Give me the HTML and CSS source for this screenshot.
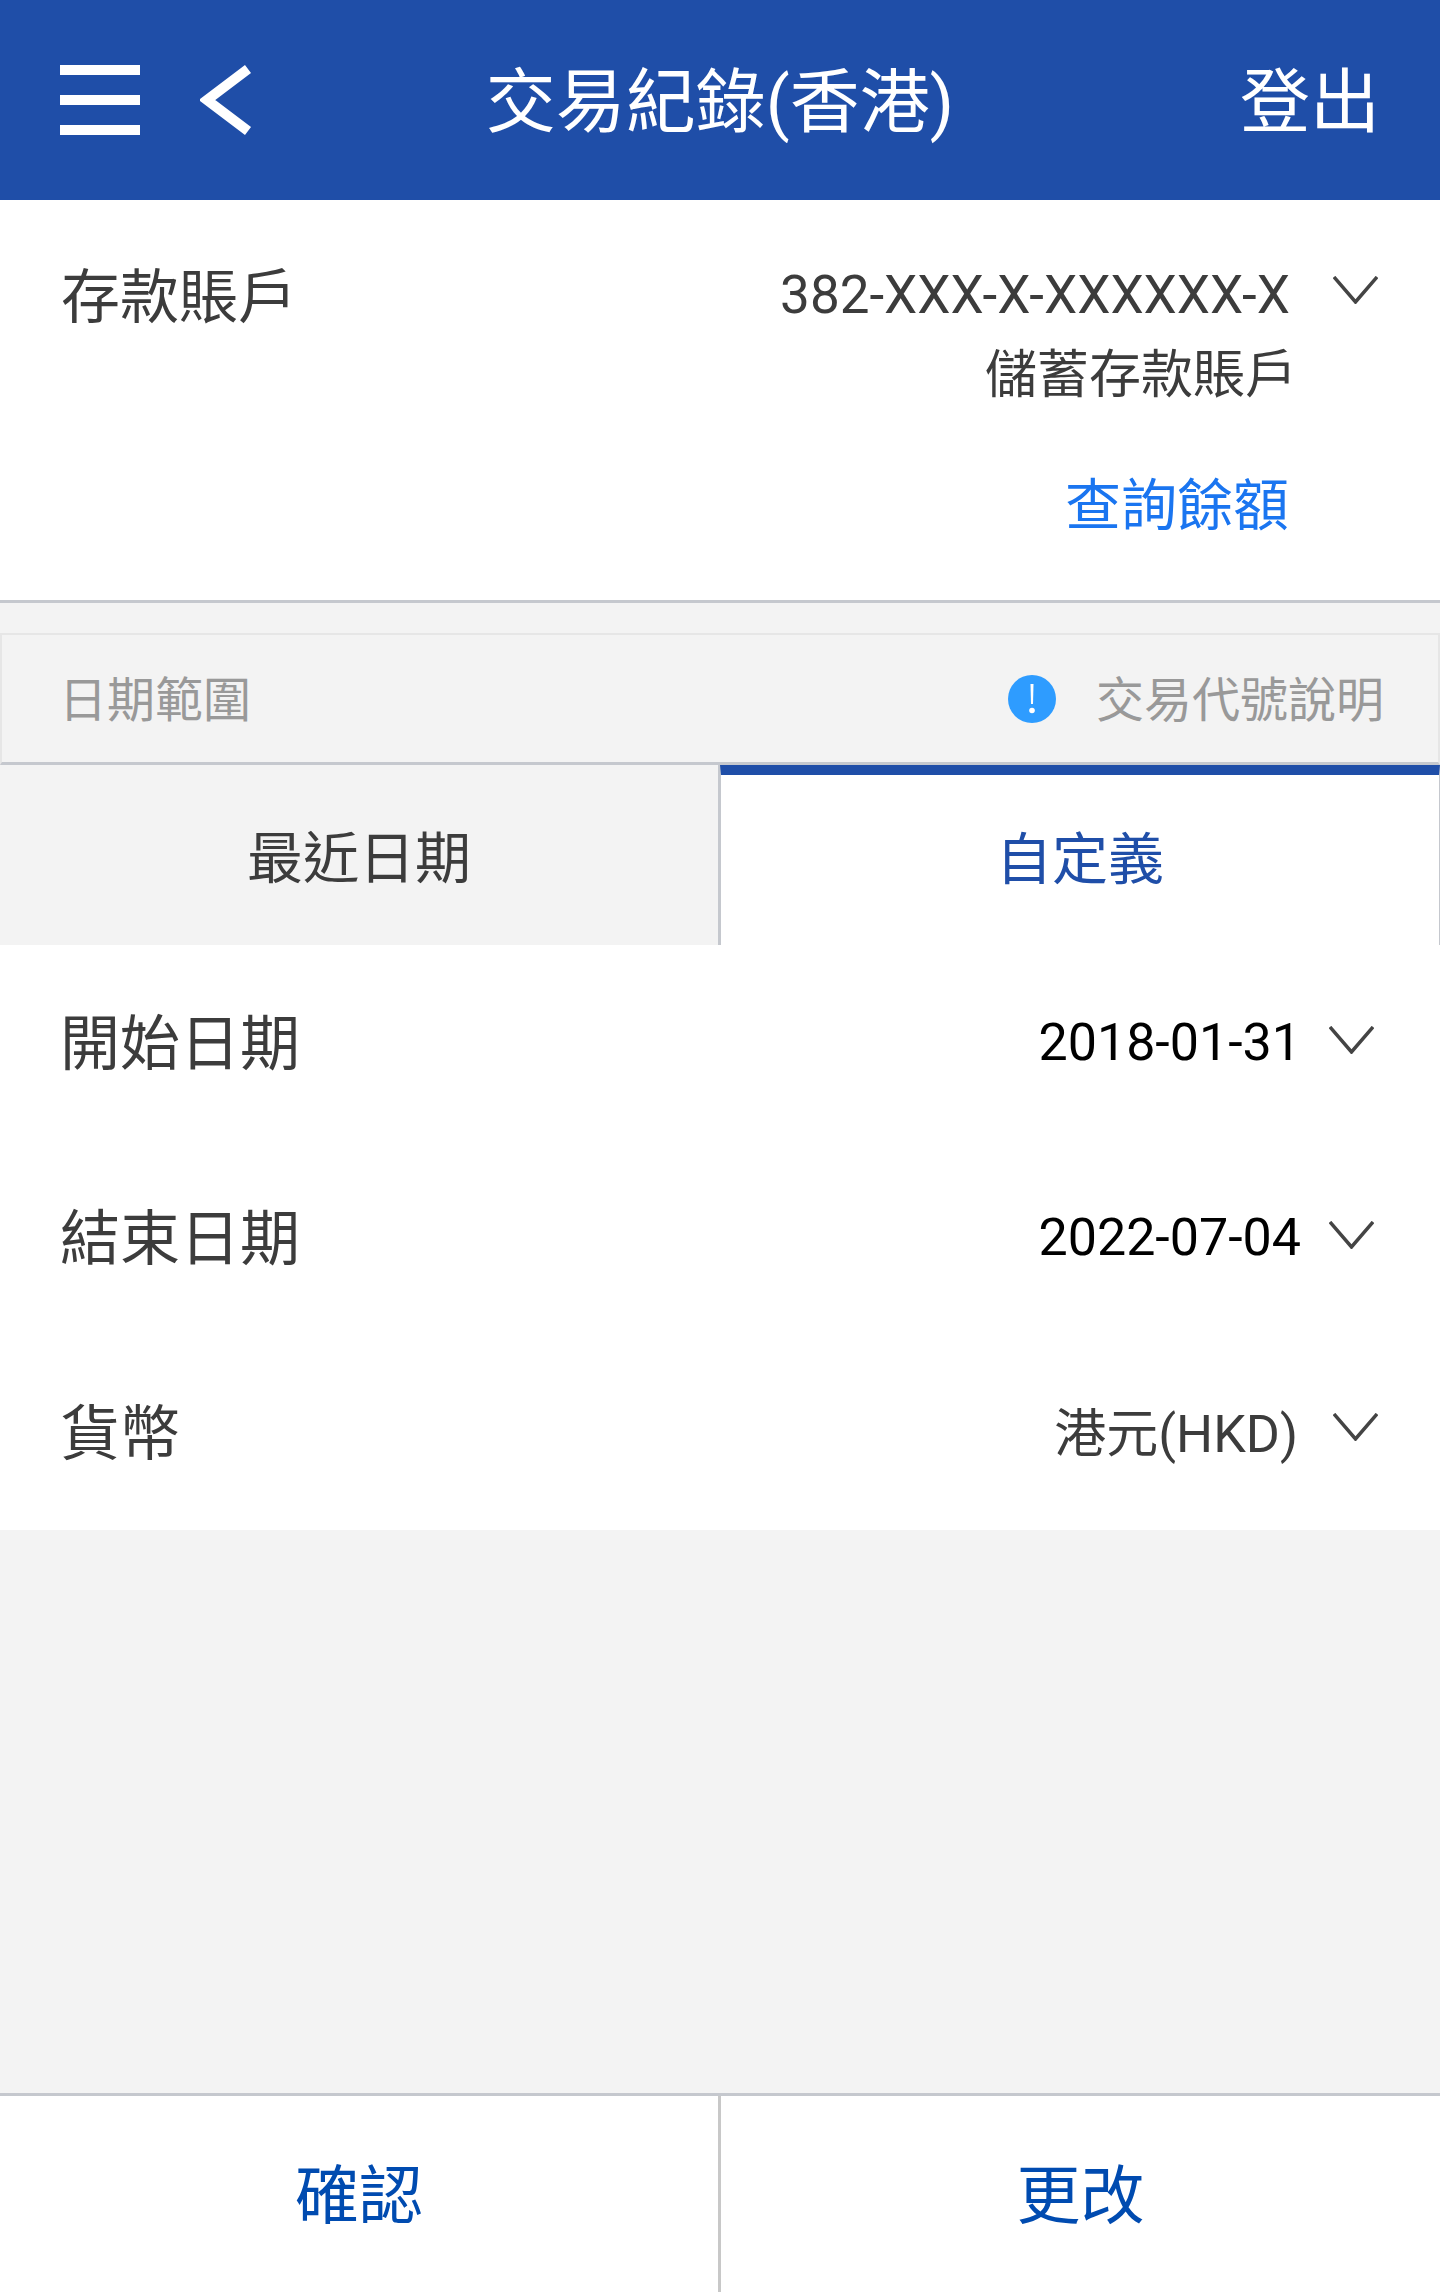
FILE: index.html
```html
<!DOCTYPE html>
<html lang="zh-Hant">
<head>
  <meta charset="UTF-8">
  <meta name="viewport" content="width=device-width, initial-scale=1.0">
  <title>交易紀錄(香港)</title>
  <link rel="stylesheet" href="styles.css">
</head>
<body>

  <div class="page">
    <!-- Header -->
    <div class="header">
      <div class="header-left">
        <svg class="menu-icon" viewBox="0 0 80 70"><path d="M0 0h80v10H0zM0 30h80v10H0zM0 60h80v10H0z" fill="#fff"/></svg>
        <svg class="back-icon" viewBox="0 0 52 70"><path d="M48 4 7 35l41 31" fill="none" stroke="#fff" stroke-width="10"/></svg>
      </div>
      <div class="header-title">交易紀錄(香港)</div>
      <div class="header-right">登出</div>
    </div>

    <!-- Account -->
    <div class="account">
      <div class="account-label">存款賬戶</div>
      <div class="account-info">
        <div class="account-top">
          <div class="account-number">382-XXX-X-XXXXXX-X</div>
          <svg class="chevron chevron-account" viewBox="0 0 45 28"><path d="m1 1 21.500 25L44 1" fill="none" stroke="#444" stroke-width="3.500"/></svg>
        </div>
        <div class="account-type">儲蓄存款賬戶</div>
        <div class="account-link">查詢餘額</div>
      </div>
    </div>

    <!-- Date range heading -->
    <div class="range-head">
      <div>日期範圍</div>
      <div class="range-help">
        <svg class="info-icon" viewBox="0 0 48 48">
          <circle cx="24" cy="24" r="24" fill="#2e9cff"/>
          <path d="M22.500 9h3l-.5 20h-2z" fill="#fff"/>
          <circle cx="24" cy="35.500" r="2.800" fill="#fff"/>
        </svg>
        <span>交易代號說明</span>
      </div>
    </div>

    <!-- Tabs -->
    <div class="tabs">
      <div class="tab">最近日期</div>
      <div class="tab tab-active">自定義</div>
    </div>

    <!-- Form -->
    <div class="form">
      <div class="form-row">
        <div class="form-label">開始日期</div>
        <div class="form-value">2018-01-31</div>
        <svg class="chevron" viewBox="0 0 45 28"><path d="m1 1 21.500 25L44 1" fill="none" stroke="#444" stroke-width="3.500"/></svg>
      </div>
      <div class="form-row">
        <div class="form-label">結束日期</div>
        <div class="form-value">2022-07-04</div>
        <svg class="chevron" viewBox="0 0 45 28"><path d="m1 1 21.500 25L44 1" fill="none" stroke="#444" stroke-width="3.500"/></svg>
      </div>
      <div class="form-row">
        <div class="form-label">貨幣</div>
        <div class="form-value form-value-grey">港元(HKD)</div>
        <svg class="chevron chevron-currency" viewBox="0 0 45 28"><path d="m1 1 21.500 25L44 1" fill="none" stroke="#444" stroke-width="3.500"/></svg>
      </div>
    </div>

    <div class="filler"></div>

    <!-- Footer -->
    <div class="footer">
      <div class="footer-btn">確認</div>
      <div class="footer-btn">更改</div>
    </div>
  </div>

</body>
</html>
```

FILE: styles.css
```css
body {
  font-family: Roboto, "Noto Sans CJK TC", sans-serif;
  background-color: #f3f3f3;
  color: #3c3c3c;
  margin: 0;
  padding: 0;
}

.page {
  height: 2292px;
  display: flex;
  flex-direction: column;
  overflow: hidden;
}

.header {
  height: 200px;
  flex-shrink: 0;
  box-sizing: border-box;
  background-color: #1f4ea8;
  color: #fff;
  display: grid;
  grid-template-columns: 1fr auto 1fr;
  align-items: center;
  padding: 0 60px;
  font-size: 70px;
}

.header-title,
.header-right {
  padding-bottom: 8px;
}

.header-left {
  display: flex;
  align-items: center;
  gap: 60px;
}

.menu-icon {
  width: 80px;
  height: 70px;
}

.back-icon {
  width: 52px;
  height: 70px;
}

.header-right {
  text-align: right;
}

.account {
  height: 403px;
  flex-shrink: 0;
  box-sizing: border-box;
  background-color: #fff;
  border-bottom: 3px solid #c5c8ce;
  display: flex;
  justify-content: space-between;
  padding: 50px 62px 0 61px;
}

.account-label {
  font-size: 59px;
  line-height: 84px;
  margin-top: 6px;
}

.account-info {
  text-align: right;
  font-size: 52px;
  width: 620px;
  margin-top: 9px;
}

.account-number {
  font-size: 53px;
}

.account-top {
  display: flex;
  align-items: center;
  justify-content: flex-end;
  gap: 43px;
  height: 72px;
}

.account-type {
  line-height: 72px;
  margin-top: 9px;
  padding-right: 81px;
}

.account-link {
  color: #1a75f0;
  font-size: 56px;
  line-height: 80px;
  margin-top: 54px;
  padding-right: 89px;
}

.chevron {
  width: 45px;
  height: 28px;
  flex-shrink: 0;
}

.chevron-account {
  margin-top: -10px;
}

.range-head {
  height: 132px;
  flex-shrink: 0;
  box-sizing: border-box;
  margin-top: 30px;
  border: 2px solid #e6e6e6;
  border-bottom: 3px solid #c5c8ce;
  display: flex;
  align-items: center;
  justify-content: space-between;
  padding: 0 54px 6px 57px;
  font-size: 48px;
  color: #999;
}

.range-help {
  display: flex;
  align-items: center;
  gap: 40px;
}

.info-icon {
  width: 48px;
  height: 48px;
  margin-top: 6px;
}

.tabs {
  height: 180px;
  flex-shrink: 0;
  display: grid;
  grid-template-columns: 720px 720px;
}

.tab {
  display: flex;
  align-items: center;
  justify-content: center;
  font-size: 56px;
  box-sizing: border-box;
  border-right: 2px solid #c5c8ce;
  padding-bottom: 4px;
}

.tab-active {
  background-color: #fff;
  color: #1f4ea8;
  border-left: 1px solid #c5c8ce;
  border-top: 10px solid #1f4ea8;
  border-right: 1px solid #c5c8ce;
  padding-bottom: 12px;
}

.form {
  background-color: #fff;
  height: 585px;
  flex-shrink: 0;
  padding: 0 66px 0 60px;
  display: flex;
  flex-direction: column;
}

.form-row {
  flex: 0 0 195px;
  box-sizing: border-box;
  padding-bottom: 8px;
  display: flex;
  align-items: center;
  gap: 28px;
}

.form-row .chevron {
  margin-top: 2px;
}

.form-row .chevron-currency {
  margin: -4px -4px 0 4px;
}

.form-label {
  font-size: 60px;
  flex: 1;
}

.form-value {
  font-size: 52px;
  color: #000;
  margin-top: 8px;
}

.form-value-grey {
  color: #3c3c3c;
  margin-top: 2px;
  margin-right: 3px;
}

.filler {
  flex: 1;
}

.footer {
  height: 199px;
  flex-shrink: 0;
  box-sizing: border-box;
  background-color: #fff;
  border-top: 3px solid #c5c8ce;
  display: grid;
  grid-template-columns: 721px 719px;
}

.footer-btn {
  display: flex;
  align-items: center;
  justify-content: center;
  font-size: 64px;
  color: #004bb0;
  padding-bottom: 8px;
}

.footer-btn:first-child {
  border-right: 3px solid #c8c8c8;
}
```
